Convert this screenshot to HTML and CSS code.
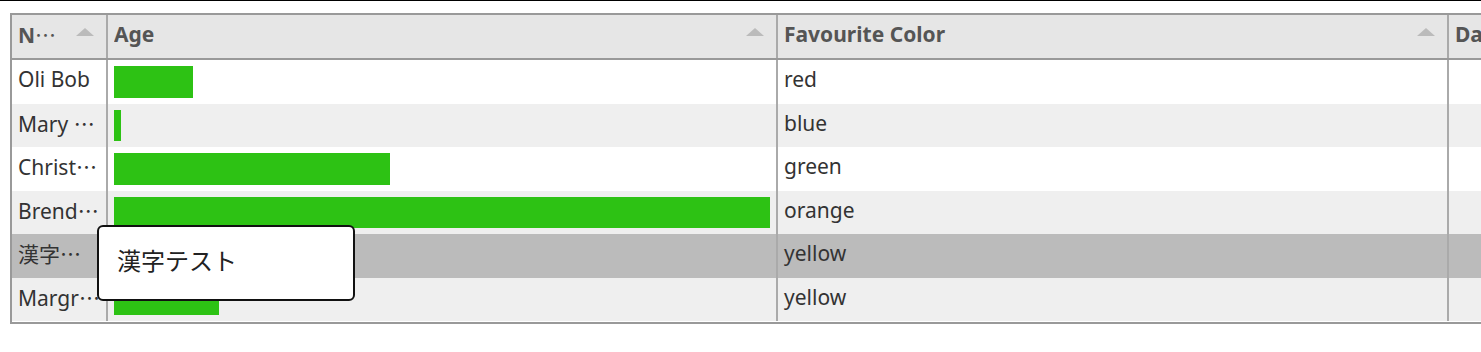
FILE: index.html
```html
<!DOCTYPE html>
<html lang="ja">
<head>
  <meta charset="UTF-8" />
  <title>Table</title>
  <link rel="stylesheet" href="styles.css">
</head>
<body>
  <div class="topline"></div>

  <div class="page">
    <div class="grid">
      <div class="grid-header">
        <div class="col col-name"><span class="col-title">N<span class="ell">…</span></span><span class="sort"></span></div>
        <div class="col col-age"><span class="col-title">Age</span><span class="sort"></span></div>
        <div class="col col-color"><span class="col-title">Favourite Color</span><span class="sort"></span></div>
        <div class="col col-date"><span class="col-title">Date Of Birth</span><span class="sort"></span></div>
      </div>

      <div class="grid-body">
        <div class="row">
          <div class="cell col-name">Oli Bob</div>
          <div class="cell col-age bar-cell"><div class="bar" style="width: 12%"></div></div>
          <div class="cell col-color">red</div>
          <div class="cell col-date"></div>
        </div>
        <div class="row row-even">
          <div class="cell col-name">Mary <span class="ell">…</span></div>
          <div class="cell col-age bar-cell"><div class="bar" style="width: 1%"></div></div>
          <div class="cell col-color">blue</div>
          <div class="cell col-date"></div>
        </div>
        <div class="row">
          <div class="cell col-name">Christ<span class="ell">…</span></div>
          <div class="cell col-age bar-cell"><div class="bar" style="width: 42%"></div></div>
          <div class="cell col-color">green</div>
          <div class="cell col-date"></div>
        </div>
        <div class="row row-even">
          <div class="cell col-name">Brend<span class="ell">…</span></div>
          <div class="cell col-age bar-cell"><div class="bar" style="width: 100%"></div></div>
          <div class="cell col-color">orange</div>
          <div class="cell col-date"></div>
        </div>
        <div class="row row-selected">
          <div class="cell col-name">漢字<span class="ell">…</span></div>
          <div class="cell col-age bar-cell"><div class="bar" style="width: 20%"></div></div>
          <div class="cell col-color">yellow</div>
          <div class="cell col-date"></div>
        </div>
        <div class="row row-even">
          <div class="cell col-name">Margr<span class="ell">…</span></div>
          <div class="cell col-age bar-cell"><div class="bar" style="width: 16%"></div></div>
          <div class="cell col-color">yellow</div>
          <div class="cell col-date"></div>
        </div>
      </div>
    </div>
  </div>

  <div class="tooltip">漢字テスト</div>
</body>
</html>
```

FILE: styles.css
```css
* {
  box-sizing: border-box;
}

html, body {
  overflow: hidden;
}

body {
  margin: 0;
  font-family: "Noto Sans", "Noto Sans CJK JP", sans-serif;
  font-size: 21px;
  color: #333;
  background: #fff;
}

.topline {
  height: 1px;
  background: #000;
}

.page {
  padding: 12px 0 0 10px;
  overflow: hidden;
}

.grid {
  width: 1700px;
  border: 2px solid #999;
  border-right: none;
  background: #fff;
}

.grid-header {
  display: flex;
  height: 45px;
  background: #e6e6e6;
  border-bottom: 2px solid #999;
  color: #555;
  font-weight: bold;
}

.grid-body {
  padding-bottom: 1px;
}

.row {
  display: flex;
  height: 43.5px;
  background: #fff;
}

.row-even {
  background: #efefef;
}

.row-selected {
  background: #bbb;
}

.col,
.cell {
  flex: none;
  border-right: 2px solid #aaa;
  padding: 4px 6px 8px;
  line-height: 31.5px;
  white-space: nowrap;
  overflow: hidden;
}

.col {
  display: flex;
  align-items: flex-start;
}

.col-title {
  flex: 1;
  min-width: 0;
  overflow: hidden;
}

.sort {
  flex: none;
  width: 0;
  height: 0;
  margin: 9px 6px 0 8px;
  border-left: 9px solid transparent;
  border-right: 9px solid transparent;
  border-bottom: 8px solid #bbb;
}

.col-name { width: 96px; }
.col-age { width: 670px; }
.col-color { width: 671px; }
.col-date { width: 260px; }

.ell {
  font-family: "Noto Sans CJK JP", sans-serif;
  font-weight: normal;
}

.bar-cell {
  padding: 6px;
}

.bar {
  height: 100%;
  background: #2dc214;
}

.tooltip {
  position: absolute;
  left: 97px;
  top: 225px;
  width: 258px;
  height: 76px;
  padding: 17px 18px;
  border: 2px solid #111;
  border-radius: 6px;
  background: #fff;
  font-family: "Noto Sans CJK JP", sans-serif;
  font-size: 24px;
  line-height: 32px;
  color: #222;
}
```
